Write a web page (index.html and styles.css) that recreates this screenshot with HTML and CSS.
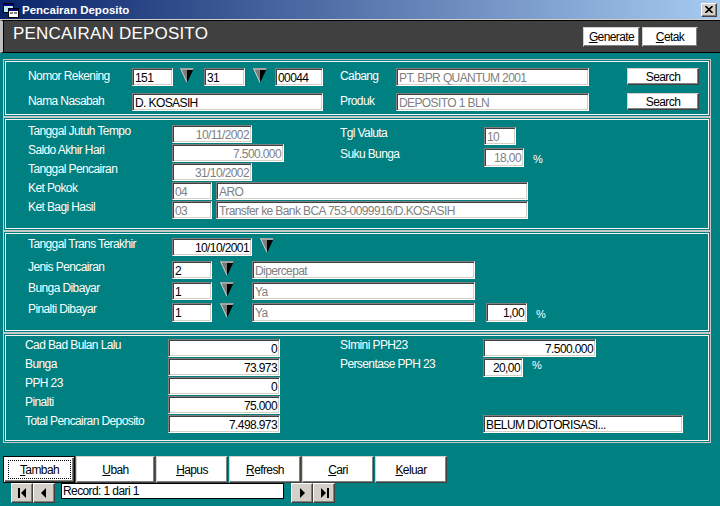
FILE: index.html
```html
<!DOCTYPE html>
<html lang="id">
<head>
<meta charset="UTF-8">
<title>Pencairan Deposito</title>
<link rel="stylesheet" href="styles.css">
</head>
<body>
<svg class="defs" width="0" height="0">
    <symbol id="tri" viewBox="0 0 14 15">
        <polygon points="0,0 7,0 7,15" fill="#7c7c7c"/>
        <polygon points="7,0 14,0 7,15" fill="#000"/>
        <polygon points="0,0 14,0 12.8,2 1.2,2" fill="#a4a4a4"/>
        <line x1="0.6" y1="0.6" x2="7" y2="14.4" stroke="#d0d0d0" stroke-width="1"/>
    </symbol>
</svg>
<div class="window">
    <div class="titlebar">
        <svg class="app-icon" width="16" height="16" viewBox="0 0 16 16">
            <rect x="0.5" y="1.5" width="10" height="9" fill="#c0e8f0" stroke="#000"/>
            <rect x="1" y="2" width="9" height="2" fill="#000080"/>
            <rect x="5.5" y="6.5" width="10" height="9" fill="#fff" stroke="#000"/>
            <rect x="6" y="7" width="9" height="2" fill="#000080"/>
            <rect x="7" y="10" width="3" height="2" fill="#808080"/>
            <rect x="11" y="10" width="3" height="2" fill="#808080"/>
        </svg>
        <span class="title-text">Pencairan Deposito</span>
        <div class="close-btn">
            <svg width="8" height="7" viewBox="0 0 8 7"><path d="M0.5 0 L7.5 7 M7.5 0 L0.5 7" stroke="#000" stroke-width="1.6"/></svg>
        </div>
    </div>

    <div class="header">
        <h1>PENCAIRAN DEPOSITO</h1>
        <div class="header-actions">
            <button class="btn btn-head w57"><u>G</u>enerate</button>
            <button class="btn btn-head w56"><u>C</u>etak</button>
        </div>
    </div>

    <div class="content">
        <!-- rekening -->
        <section class="panel panel-akun">
            <div class="row">
                <span class="lbl w104">Nomor Rekening</span>
                <span class="fld w41">151</span>
                <svg class="drop ml7"><use href="#tri"/></svg>
                <span class="fld w41 ml10">31</span>
                <svg class="drop ml8"><use href="#tri"/></svg>
                <span class="fld w48 ml8">00044</span>
                <span class="lbl w56 ml17">Cabang</span>
                <span class="fld w193 dim">PT. BPR QUANTUM 2001</span>
                <button class="btn btn-search ml38">Search</button>
            </div>
            <div class="row">
                <span class="lbl w104">Nama Nasabah</span>
                <span class="fld w191">D. KOSASIH</span>
                <span class="lbl w56 ml17">Produk</span>
                <span class="fld w193 dim">DEPOSITO 1 BLN</span>
                <button class="btn btn-search ml38">Search</button>
            </div>
        </section>

        <!-- tempo -->
        <section class="panel panel-tempo">
            <div class="split">
                <div class="col-left">
                    <div class="row">
                        <span class="lbl w144">Tanggal Jutuh Tempo</span>
                        <span class="fld w80 dim num">10/11/2002</span>
                    </div>
                    <div class="row">
                        <span class="lbl w144">Saldo Akhir Hari</span>
                        <span class="fld w112 dim num">7.500.000</span>
                    </div>
                    <div class="row">
                        <span class="lbl w144">Tanggal Pencairan</span>
                        <span class="fld w80 dim num">31/10/2002</span>
                    </div>
                </div>
                <div class="col-right">
                    <div class="row">
                        <span class="lbl w144">Tgl Valuta</span>
                        <span class="fld w32 dim">10</span>
                    </div>
                    <div class="row">
                        <span class="lbl w144">Suku Bunga</span>
                        <span class="fld w40 tall dim num">18,00</span>
                        <span class="pct">%</span>
                    </div>
                </div>
            </div>
            <div class="row">
                <span class="lbl w144">Ket Pokok</span>
                <span class="fld w40 dim">04</span>
                <span class="fld w312 ml4 dim">ARO</span>
            </div>
            <div class="row">
                <span class="lbl w144">Ket Bagi Hasil</span>
                <span class="fld w40 dim">03</span>
                <span class="fld w312 ml4 dim">Transfer ke Bank BCA 753-0099916/D.KOSASIH</span>
            </div>
        </section>

        <!-- transaksi -->
        <section class="panel panel-trans">
            <div class="row">
                <span class="lbl w144">Tanggal Trans Terakhir</span>
                <span class="fld w80 num">10/10/2001</span>
                <svg class="drop ml8"><use href="#tri"/></svg>
            </div>
            <div class="row">
                <span class="lbl w144">Jenis Pencairan</span>
                <span class="fld w40">2</span>
                <svg class="drop ml8"><use href="#tri"/></svg>
                <span class="fld w223 ml18 dim">Dipercepat</span>
            </div>
            <div class="row">
                <span class="lbl w144">Bunga Dibayar</span>
                <span class="fld w40">1</span>
                <svg class="drop ml8"><use href="#tri"/></svg>
                <span class="fld w223 ml18 dim">Ya</span>
            </div>
            <div class="row">
                <span class="lbl w144">Pinalti Dibayar</span>
                <span class="fld w40 tall">1</span>
                <svg class="drop ml8"><use href="#tri"/></svg>
                <span class="fld w223 ml18 tall dim">Ya</span>
                <span class="fld w41 ml11 tall num">1,00</span>
                <span class="pct">%</span>
            </div>
        </section>

        <!-- total -->
        <section class="panel panel-total">
            <div class="row">
                <span class="lbl w143">Cad Bad Bulan Lalu</span>
                <span class="fld w112 num">0</span>
                <span class="lbl w143 ml60">SImini PPH23</span>
                <span class="fld w113 num">7.500.000</span>
            </div>
            <div class="row">
                <span class="lbl w143">Bunga</span>
                <span class="fld w112 num">73.973</span>
                <span class="lbl w143 ml60">Persentase PPH 23</span>
                <span class="fld w40 tall num">20,00</span>
                <span class="pct pct-up">%</span>
            </div>
            <div class="row">
                <span class="lbl w143">PPH 23</span>
                <span class="fld w112 num">0</span>
            </div>
            <div class="row">
                <span class="lbl w143">Pinalti</span>
                <span class="fld w112 num">75.000</span>
            </div>
            <div class="row">
                <span class="lbl w143">Total Pencairan Deposito</span>
                <span class="fld w112 num">7.498.973</span>
                <span class="spacer w203"></span>
                <span class="fld w200">BELUM DIOTORISASI...</span>
            </div>
        </section>

        <div class="toolbar">
            <button class="btn btn-tool btn-focus"><span class="cap"><u>T</u>ambah</span></button>
            <button class="btn btn-tool w79"><u>U</u>bah</button>
            <button class="btn btn-tool"><u>H</u>apus</button>
            <button class="btn btn-tool"><u>R</u>efresh</button>
            <button class="btn btn-tool"><u>C</u>ari</button>
            <button class="btn btn-tool"><u>K</u>eluar</button>
        </div>

        <div class="nav">
            <button class="nav-btn">
                <svg width="9" height="10" viewBox="0 0 9 10"><rect x="0" y="0" width="2" height="10"/><polygon points="8,0 8,10 3,5"/></svg>
            </button>
            <button class="nav-btn">
                <svg width="6" height="10" viewBox="0 0 6 10"><polygon points="5,0 5,10 0,5"/></svg>
            </button>
            <div class="record">Record: 1 dari 1</div>
            <button class="nav-btn">
                <svg width="6" height="10" viewBox="0 0 6 10"><polygon points="1,0 1,10 6,5"/></svg>
            </button>
            <button class="nav-btn">
                <svg width="9" height="10" viewBox="0 0 9 10"><polygon points="1,0 1,10 6,5"/><rect x="7" y="0" width="2" height="10"/></svg>
            </button>
        </div>
    </div>
</div>
</body>
</html>
```

FILE: styles.css
```css
* {
    box-sizing: border-box;
}

body {
    margin: 0;
    background: #008080;
    font-family: "Liberation Sans", Arial, sans-serif;
    font-size: 12px;
    letter-spacing: -0.6px;
    color: #000;
}

.defs {
    position: absolute;
    width: 0;
    height: 0;
}

.window {
    width: 720px;
    height: 506px;
    overflow: hidden;
    background: #008080;
}

/* title bar */
.titlebar {
    height: 20px;
    display: flex;
    align-items: center;
    padding: 0 3px;
    border-bottom: 1px solid #d4d0c8;
    background: linear-gradient(90deg, #0a246a 0%, #a6caf0 100%);
}

.app-icon {
    margin-right: 3px;
    flex: none;
}

.title-text {
    color: #fff;
    font: bold 11.5px "Liberation Sans", Arial, sans-serif;
    letter-spacing: 0;
}

.close-btn {
    margin-left: auto;
    width: 16px;
    height: 14px;
    background: #d4d0c8;
    border: 1px solid;
    border-color: #fff #404040 #404040 #fff;
    box-shadow: inset -1px -1px 0 #808080;
    display: flex;
    align-items: center;
    justify-content: center;
}

/* dark header */
.header {
    height: 33px;
    display: flex;
    align-items: flex-start;
    background: #404040;
    border-top: 1px solid #000;
    border-bottom: 1px solid #000;
    border-left: 3px solid #c0c0c0;
    box-shadow: inset 1px 0 0 #000;
    padding: 0 22px 0 10px;
}

.header h1 {
    margin: 0;
    padding-top: 3px;
    font: normal 17px "Liberation Sans", Arial, sans-serif;
    line-height: 20px;
    letter-spacing: 0.2px;
    color: #fff;
}

.header-actions {
    margin-left: auto;
    margin-top: 6px;
    display: flex;
    gap: 2px;
}

/* body */
.content {
    padding: 6px 0 0 3px;
}

.panel {
    width: 708px;
    border: 1px solid #c8c8c8;
    box-shadow: inset 0 0 0 1px #008080, inset 0 0 0 2px #f4f4f4;
}

.panel-akun {
    height: 58px;
    padding: 8px 0 0 24px;
}

.panel-akun .row + .row {
    margin-top: 7px;
}

.panel-akun .lbl {
    line-height: 16px;
}

.panel-tempo {
    height: 114px;
    padding: 7px 0 0 24px;
}

.panel-tempo .split {
    display: flex;
}

.col-left {
    width: 312px;
}

.col-left .row + .row,
.panel-tempo .split + .row,
.panel-tempo .row + .row {
    margin-top: 1px;
}

.col-right {
    margin-top: 2px;
}

.col-right .row + .row {
    margin-top: 3px;
}

.panel-trans {
    height: 102px;
    padding: 6px 0 0 24px;
}

.panel-trans .row {
    height: 19px;
}

.panel-trans .row + .row {
    margin-top: 2px;
}

.panel-trans .row:nth-child(2) {
    margin-top: 4px;
}

.panel-total {
    height: 110px;
    padding: 5px 0 0 21px;
}

.panel-total .row {
    height: 19px;
}

.row {
    display: flex;
    align-items: flex-start;
    height: 18px;
}

.lbl {
    flex: none;
    color: #fff;
    line-height: 12px;
    white-space: nowrap;
}

.fld {
    flex: none;
    display: block;
    height: 18px;
    background: #fff;
    border: 1px solid;
    border-color: #808080 #fff #fff #808080;
    box-shadow: inset 1px 1px 0 #404040, inset -1px -1px 0 #d4d0c8;
    padding: 2px 2px 0 2px;
    line-height: 14px;
    white-space: nowrap;
    overflow: hidden;
}

.fld.tall {
    height: 19px;
}

.fld.dim {
    color: #808080;
}

.fld.num {
    text-align: right;
}

.drop {
    flex: none;
    width: 14px;
    height: 15px;
}

.pct {
    color: #fff;
    font-size: 11px;
    letter-spacing: 0;
    line-height: 12px;
    margin: 5px 0 0 9px;
}

.pct-up {
    margin-top: 1px;
}

.spacer {
    flex: none;
}

/* buttons */
.btn {
    flex: none;
    font: inherit;
    letter-spacing: inherit;
    color: #000;
    background: #fff;
    border: 1px solid;
    border-color: #d4d0c8 #404040 #404040 #d4d0c8;
    box-shadow: inset -1px -1px 0 #808080;
    padding: 0;
    line-height: 14px;
    text-align: center;
}

.btn-head {
    height: 20px;
}

.btn-search {
    width: 72px;
    height: 17px;
}

.toolbar {
    display: flex;
    gap: 1px;
    margin-top: 13px;
}

.btn-tool {
    width: 72px;
    height: 27px;
}

.btn-focus {
    display: flex;
    border-color: #000;
    box-shadow: inset 1px 1px 0 #fff, inset -1px -1px 0 #404040, inset -2px -2px 0 #808080;
    padding: 3px 3px 3px 4px;
}

.btn-focus .cap {
    flex: 1;
    border: 1px dotted #000;
    line-height: 19px;
}

.nav {
    display: flex;
    padding-left: 8px;
}

.nav-btn {
    flex: none;
    width: 22px;
    height: 20px;
    padding: 0;
    background: #d4d0c8;
    border: 1px solid;
    border-color: #fff #404040 #404040 #fff;
    box-shadow: inset -1px -1px 0 #808080;
    display: flex;
    align-items: center;
    justify-content: center;
}

.record {
    width: 223px;
    height: 16px;
    margin: 0 7px 0 6px;
    padding-left: 1px;
    background: #fff;
    border: 1px solid #000;
    line-height: 14px;
}

/* sizes */
.w32 { width: 32px; }
.w40 { width: 40px; }
.w41 { width: 41px; }
.w48 { width: 48px; }
.w56 { width: 56px; }
.w57 { width: 57px; }
.w79 { width: 79px; }
.w80 { width: 80px; }
.w104 { width: 104px; }
.w112 { width: 112px; }
.w113 { width: 113px; }
.w143 { width: 143px; }
.w144 { width: 144px; }
.w191 { width: 191px; }
.w193 { width: 193px; }
.w200 { width: 200px; }
.w203 { width: 203px; }
.w223 { width: 223px; }
.w312 { width: 312px; }

.ml4 { margin-left: 4px; }
.ml7 { margin-left: 7px; }
.ml8 { margin-left: 8px; }
.ml10 { margin-left: 10px; }
.ml11 { margin-left: 11px; }
.ml17 { margin-left: 17px; }
.ml18 { margin-left: 18px; }
.ml38 { margin-left: 38px; }
.ml60 { margin-left: 60px; }
```
